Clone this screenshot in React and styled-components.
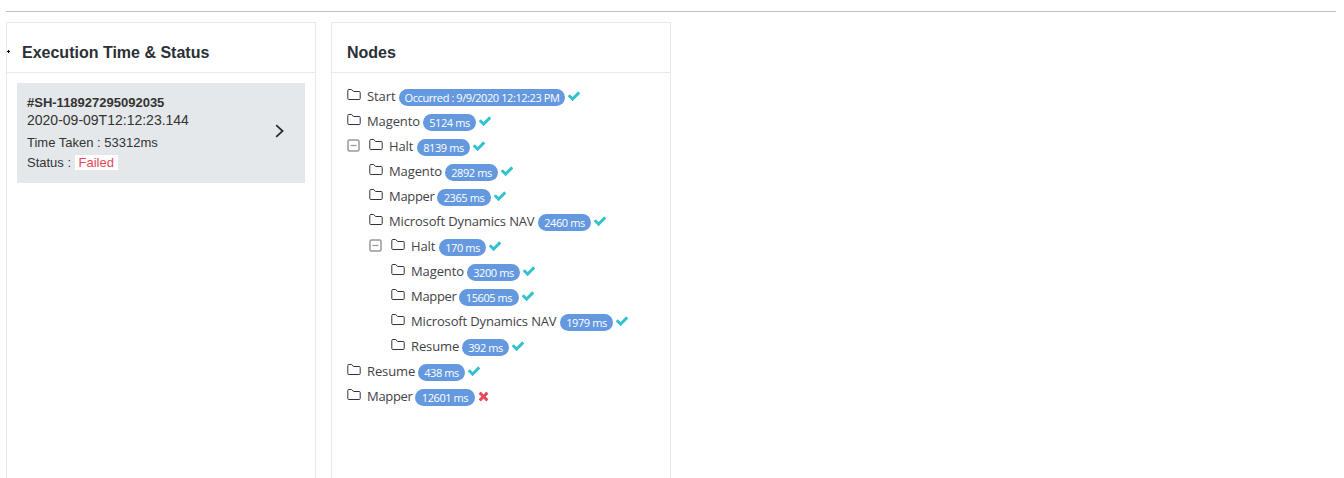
import React from 'react';
import styled, { createGlobalStyle } from 'styled-components';

const GlobalStyle = createGlobalStyle`
  * { box-sizing: border-box; }
  body {
    margin: 0;
    background: #fff;
    color: #2b2f36;
    font-family: "Liberation Sans", Arial, sans-serif;
  }
`;

const Page = styled.main`
  height: 478px;
  padding: 11px 8px 0 6px;
  overflow: hidden;
`;

const Divider = styled.hr`
  height: 1px;
  margin: 0 0 10px;
  border: 0;
  background: #c0c0c0;
`;

const Columns = styled.div`
  display: flex;
  gap: 15px;
`;

const Panel = styled.section`
  position: relative;
  width: ${({ $width }) => $width}px;
  height: 480px;
  border: 1px solid #e6eaee;
`;

const Bullet = styled.svg`
  position: absolute;
  left: 0;
  top: 27px;
  width: 3px;
  height: 3px;
`;

const PanelTitle = styled.h2`
  height: 50px;
  margin: 0;
  padding: 20px 15px 0;
  border-bottom: 1px solid #e6eaee;
  font-size: 16px;
  line-height: 20px;
  font-weight: 700;
  white-space: nowrap;
`;

const RunCard = styled.article`
  display: flex;
  align-items: center;
  justify-content: space-between;
  width: 288px;
  height: 100px;
  margin: 10px;
  padding: 0 20px 0 10px;
  background: #e4e8eb;
`;

const RunDetails = styled.div`
  display: flex;
  flex-direction: column;
  height: 100px;
  padding-top: 11px;
  color: #333;
  white-space: nowrap;
`;

const RunLine = styled.div`
  height: ${({ $height }) => $height}px;
  line-height: ${({ $leading }) => $leading || 18}px;
  font-size: ${({ $size }) => $size || 13}px;
  font-weight: ${({ $bold }) => ($bold ? 700 : 400)};
`;

const FailedTag = styled.span`
  display: inline-block;
  width: 43px;
  height: 15px;
  line-height: 15px;
  text-align: center;
  background: #fff;
  color: #ea4656;
`;

const Chevron = styled.svg`
  width: 10px;
  height: 14px;
  margin-top: -4px;
`;

const Tree = styled.ul`
  margin: 0;
  padding: 11px 0 0 15px;
  list-style: none;
`;

const TreeRow = styled.li`
  display: flex;
  align-items: flex-start;
  height: 25px;
  padding-left: ${({ $depth }) => $depth * 22}px;
`;

const Toggle = styled.svg`
  width: 14px;
  height: 14px;
  margin: 5px 8px 0 0;
`;

const Folder = styled.svg`
  width: 14px;
  height: 12px;
  margin: 5px 6px 0 0;
`;

const NodeName = styled.span`
  width: ${({ $width }) => $width}px;
  line-height: 25px;
  font-family: "Open Sans", "Noto Sans", sans-serif;
  font-size: 13px;
  color: #3f4247;
  letter-spacing: ${({ $spacing }) => $spacing}px;
  white-space: nowrap;
`;

const Badge = styled.span`
  width: ${({ $width }) => $width}px;
  height: 17px;
  margin-top: 5px;
  border-radius: 9px;
  background: #6499df;
  color: #fff;
  font-family: "Open Sans", "Noto Sans", sans-serif;
  font-size: 11px;
  line-height: 17px;
  letter-spacing: -0.42px;
  text-align: center;
  white-space: nowrap;
`;

const StatusIcon = styled.svg`
  width: 14px;
  height: 14px;
  margin: 5px 0 0 2px;
`;

const labels = {
  Start: { width: 32, spacing: -0.1 },
  Magento: { width: 56, spacing: -0.1 },
  Halt: { width: 28, spacing: -0.15 },
  Mapper: { width: 48, spacing: -0.3 },
  'Microsoft Dynamics NAV': { width: 149, spacing: -0.15 },
  Resume: { width: 51, spacing: -0.1 },
};

const nodes = [
  { name: 'Start', time: 'Occurred : 9/9/2020 12:12:23 PM', badge: 166, depth: 0 },
  { name: 'Magento', time: '5124 ms', badge: 53, depth: 0 },
  { name: 'Halt', time: '8139 ms', badge: 53, depth: 0, open: true },
  { name: 'Magento', time: '2892 ms', badge: 53, depth: 1 },
  { name: 'Mapper', time: '2365 ms', badge: 54, depth: 1 },
  { name: 'Microsoft Dynamics NAV', time: '2460 ms', badge: 53, depth: 1 },
  { name: 'Halt', time: '170 ms', badge: 47, depth: 1, open: true },
  { name: 'Magento', time: '3200 ms', badge: 53, depth: 2 },
  { name: 'Mapper', time: '15605 ms', badge: 60, depth: 2 },
  { name: 'Microsoft Dynamics NAV', time: '1979 ms', badge: 53, depth: 2 },
  { name: 'Resume', time: '392 ms', badge: 47, depth: 2 },
  { name: 'Resume', time: '438 ms', badge: 47, depth: 0 },
  { name: 'Mapper', time: '12601 ms', badge: 60, depth: 0, failed: true },
];

const CHECK =
  'M1671 566q0 40-28 68l-724 724-136 136q-28 28-68 28t-68-28l-136-136-362-362q-28-28-28-68t28-68l136-136q28-28 68-28t68 28l294 295 656-657q28-28 68-28t68 28l136 136q28 28 28 68z';
const CROSS =
  'M1430 1322q0 40-28 68l-136 136q-28 28-68 28t-68-28l-294-294-294 294q-28 28-68 28t-68-28l-136-136q-28-28-28-68t28-68l294-294-294-294q-28-28-28-68t28-68l136-136q28-28 68-28t68 28l294 294 294-294q28-28 68-28t68 28l136 136q28 28 28 68t-28 68l-294 294 294 294q28 28 28 68z';

function TreeNode({ node }) {
  const label = labels[node.name];
  return (
    <TreeRow $depth={node.depth}>
      {node.open && (
        <Toggle viewBox="0 0 14 14" fill="none" stroke="#999">
          <rect x="1" y="1" width="11" height="11" rx="1.5" strokeWidth="1.5" />
          <path d="M3.5 6.5h6" strokeWidth="1.3" />
        </Toggle>
      )}
      <Folder viewBox="0 0 14 12" fill="none" stroke="#30343a">
        <path d="M.8 1.5Q.8.5 1.8.5H4.4Q5 .5 5.3 1L6 2.1Q6.2 2.5 6.8 2.5H12.2Q13.2 2.5 13.2 3.5V9.5Q13.2 10.5 12.2 10.5H1.8Q.8 10.5.8 9.5Z" />
      </Folder>
      <NodeName $width={label.width} $spacing={label.spacing}>{node.name}</NodeName>
      <Badge $width={node.badge}>{node.time}</Badge>
      <StatusIcon viewBox="0 0 1792 1792" fill={node.failed ? '#e44c5c' : '#32c2cd'}>
        <path d={node.failed ? CROSS : CHECK} />
      </StatusIcon>
    </TreeRow>
  );
}

export default function App() {
  return (
    <>
      <GlobalStyle />
      <Page>
        <Divider />
        <Columns>
          <Panel $width={310}>
            <Bullet viewBox="0 0 3 3"><path d="M1 0h1v1h1v1H2v1H1V2H0V1h1z" /></Bullet>
            <PanelTitle>Execution Time &amp; Status</PanelTitle>
            <RunCard>
              <RunDetails>
                <RunLine $height={18} $bold>#SH-118927295092035</RunLine>
                <RunLine $height={22} $size={14} $leading={16}>2020-09-09T12:12:23.144</RunLine>
                <RunLine $height={20}>Time Taken : 53312ms</RunLine>
                <RunLine $height={20}>Status : <FailedTag>Failed</FailedTag></RunLine>
              </RunDetails>
              <Chevron viewBox="0 0 10 14" fill="none" stroke="#26292e" strokeWidth="1.7">
                <path d="M1.2 1.2 7.6 7 1.2 12.8" />
              </Chevron>
            </RunCard>
          </Panel>
          <Panel $width={340}>
            <PanelTitle>Nodes</PanelTitle>
            <Tree>
              {nodes.map((node, index) => <TreeNode key={index} node={node} />)}
            </Tree>
          </Panel>
        </Columns>
      </Page>
    </>
  );
}
